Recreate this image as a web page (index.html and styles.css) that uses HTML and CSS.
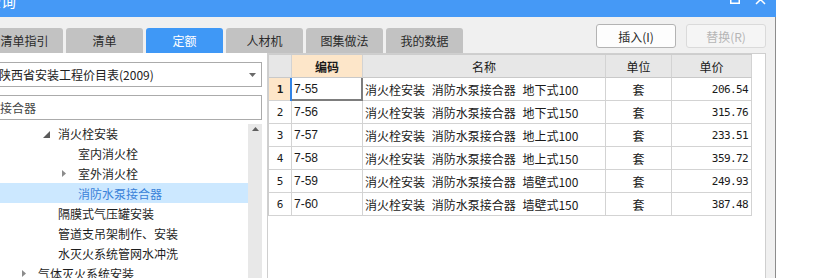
FILE: index.html
```html
<!DOCTYPE html>
<html lang="zh-CN">
  <head>
    <meta charset="UTF-8" />
    <meta name="viewport" content="width=device-width, initial-scale=1.0" />
    <title>查询</title>
    <link rel="stylesheet" href="styles.css">
  </head>
  <body>
    <div class="window">
      <div class="titlebar">
        <span class="title">查询</span>
        <div class="win-btns">
          <svg width="10" height="10" viewBox="0 0 10 10"><rect x="0.75" y="0.75" width="8.5" height="8.5" fill="none" stroke="#fff" stroke-width="1.5"/></svg>
          <svg width="11" height="11" viewBox="0 0 11 11"><path d="M1 1 L10 10 M10 1 L1 10" stroke="#fff" stroke-width="1.5"/></svg>
        </div>
      </div>

      <div class="win-body">
        <div class="toolbar">
          <div class="tabs">
            <div class="tab">清单指引</div>
            <div class="tab">清单</div>
            <div class="tab active">定额</div>
            <div class="tab">人材机</div>
            <div class="tab">图集做法</div>
            <div class="tab">我的数据</div>
          </div>
          <div class="actions">
            <button class="btn">插入(I)</button>
            <button class="btn" disabled>替换(R)</button>
          </div>
        </div>

        <div class="main">
          <!-- left: library + tree -->
          <div class="side">
            <div class="combo">
              <span>陕西省安装工程价目表(2009)</span>
              <svg width="7" height="4" viewBox="0 0 7 4"><path d="M0 0 H7 L3.5 4 Z" fill="#6a6a6a"/></svg>
            </div>
            <div class="search">接合器</div>
            <div class="tree">
              <ul class="tree-list">
                <li class="node lv2"><span class="caret"><svg width="7" height="7" viewBox="0 0 7 7"><path d="M7 0 V7 H0 Z" fill="#5a5a5a"/></svg></span>消火栓安装</li>
                <li class="node lv3"><span class="caret"></span>室内消火栓</li>
                <li class="node lv3"><span class="caret"><svg width="4" height="7" viewBox="0 0 4 7"><path d="M0 0 L4 3.5 L0 7 Z" fill="#8c8c8c"/></svg></span>室外消火栓</li>
                <li class="node lv3 selected"><span class="caret"></span>消防水泵接合器</li>
                <li class="node lv2"><span class="caret"></span>隔膜式气压罐安装</li>
                <li class="node lv2"><span class="caret"></span>管道支吊架制作、安装</li>
                <li class="node lv2"><span class="caret"></span>水灭火系统管网水冲洗</li>
                <li class="node lv1"><span class="caret"><svg width="4" height="7" viewBox="0 0 4 7"><path d="M0 0 L4 3.5 L0 7 Z" fill="#8c8c8c"/></svg></span>气体灭火系统安装</li>
              </ul>
              <div class="vscroll">
                <svg width="7" height="4" viewBox="0 0 7 4"><path d="M3.5 0 L7 4 H0 Z" fill="#5e5e5e"/></svg>
              </div>
            </div>
          </div>

          <!-- right: quota grid -->
          <div class="grid">
            <div class="sheet">
              <div class="cell head"></div>
              <div class="cell head hot">编码</div>
              <div class="cell head">名称</div>
              <div class="cell head">单位</div>
              <div class="cell head">单价</div>

              <div class="cell num hot">1</div>
              <div class="cell code current">7-55</div>
              <div class="cell name">消火栓安装 消防水泵接合器 地下式100</div>
              <div class="cell unit">套</div>
              <div class="cell price">206.54</div>

              <div class="cell num">2</div>
              <div class="cell code">7-56</div>
              <div class="cell name">消火栓安装 消防水泵接合器 地下式150</div>
              <div class="cell unit">套</div>
              <div class="cell price">315.76</div>

              <div class="cell num">3</div>
              <div class="cell code">7-57</div>
              <div class="cell name">消火栓安装 消防水泵接合器 地上式100</div>
              <div class="cell unit">套</div>
              <div class="cell price">233.51</div>

              <div class="cell num">4</div>
              <div class="cell code">7-58</div>
              <div class="cell name">消火栓安装 消防水泵接合器 地上式150</div>
              <div class="cell unit">套</div>
              <div class="cell price">359.72</div>

              <div class="cell num">5</div>
              <div class="cell code">7-59</div>
              <div class="cell name">消火栓安装 消防水泵接合器 墙壁式100</div>
              <div class="cell unit">套</div>
              <div class="cell price">249.93</div>

              <div class="cell num">6</div>
              <div class="cell code">7-60</div>
              <div class="cell name">消火栓安装 消防水泵接合器 墙壁式150</div>
              <div class="cell unit">套</div>
              <div class="cell price">387.48</div>
            </div>
          </div>
        </div>
      </div>
    </div>
  </body>
</html>
```

FILE: styles.css
```css
body,
html {
  margin: 0;
  padding: 0;
}

body {
  height: 278px;
  overflow: hidden;
  background: #fff;
  font-family: "Noto Sans CJK SC", sans-serif;
  font-size: 12px;
  color: #222;
}

/* Window frame (left part is off screen) */
.window {
  width: 790px;
  height: 300px;
  margin-left: -14px;
  display: flex;
  flex-direction: column;
}

.titlebar {
  flex: none;
  height: 17px;
  background: #4599f6;
  color: #fff;
  display: flex;
  justify-content: space-between;
  align-items: flex-start;
  overflow: visible;
}

.title {
  font-size: 15px;
  line-height: 17px;
  margin-top: -8px;
}

.win-btns {
  display: flex;
  gap: 15px;
  margin-right: 10px;
}

.win-btns svg {
  margin-top: -6px;
}

.win-body {
  flex: 1;
  display: flex;
  flex-direction: column;
  background: #f0f0f0;
  border-right: 1px solid #8c8c8c;
  min-height: 0;
}

/* Tabs + buttons */
.toolbar {
  flex: none;
  height: 36px;
  display: flex;
  align-items: flex-end;
}

.tabs {
  display: flex;
  gap: 3px;
}

.tab {
  width: 77px;
  height: 25px;
  line-height: 25px;
  text-align: center;
  background: #c2c2c2;
  border-radius: 3px 3px 0 0;
  color: #2a2a2a;
}

.tab.active {
  background: #3f98f6;
  color: #fff;
}

.actions {
  margin-left: auto;
  align-self: flex-start;
  margin-top: 7px;
  margin-right: 9px;
  display: flex;
  gap: 10px;
}

.btn {
  width: 80px;
  height: 24px;
  padding: 0;
  font-family: inherit;
  font-size: 12px;
  color: #2b2b2b;
  background: #fdfdfd;
  border: 1px solid #b3b3b3;
  border-radius: 3px;
}

.btn:disabled {
  color: #b5b5b5;
  background: #f5f5f5;
  border-color: #dadada;
}

.main {
  flex: 1;
  display: flex;
  padding-right: 9px;
  min-height: 0;
}

/* Left side */
.side {
  width: 281px;
  box-sizing: border-box;
  padding: 9px 5px 0 6px;
  background: #fff;
  display: flex;
  flex-direction: column;
}

.combo {
  height: 25px;
  box-sizing: border-box;
  border: 1px solid #ababab;
  padding: 0 5px 0 6px;
  display: flex;
  align-items: center;
  justify-content: space-between;
  white-space: nowrap;
}

.search {
  height: 25px;
  box-sizing: border-box;
  margin-top: 8px;
  border: 1px solid #ababab;
  padding-left: 7px;
  line-height: 23px;
  color: #454545;
}

.tree {
  flex: 1;
  display: flex;
  margin: 3px 0 0 -6px;
}

.tree-list {
  flex: 1;
  list-style: none;
  margin: 0;
  padding: 0;
}

.node {
  height: 20px;
  display: flex;
  align-items: center;
  white-space: nowrap;
  color: #1e1e1e;
}

.node.lv1 { padding-left: 32px; }
.node.lv2 { padding-left: 52px; }
.node.lv3 { padding-left: 72px; }

.caret {
  flex: none;
  width: 20px;
  height: 20px;
  box-sizing: border-box;
  padding-left: 4px;
  display: flex;
  align-items: center;
}

.lv2 .caret {
  padding: 3px 0 0 5px;
}

.node.selected {
  background: #cce8ff;
  color: #3a82d9;
}

.vscroll {
  width: 14px;
  margin-top: 1px;
  padding-top: 3px;
  background: #e8e8e8;
  display: flex;
  justify-content: center;
  align-items: flex-start;
}

/* Right grid */
.grid {
  flex: 1;
  background: #fff;
  border: 1px solid #cfcfcf;
  border-bottom: 0;
}

.sheet {
  display: grid;
  grid-template-columns: 23px 71px 243px 66px 80px;
  grid-auto-rows: 23px;
  width: max-content;
  border-left: 1px solid #cdcdcd;
  border-top: 1px solid #cdcdcd;
}

.cell {
  box-sizing: border-box;
  border-right: 1px solid #d3d3d3;
  border-bottom: 1px solid #d3d3d3;
  display: flex;
  align-items: center;
  white-space: nowrap;
  overflow: hidden;
  color: #1a1a1a;
}

.cell.head {
  justify-content: center;
  background: #e7e7e7;
  border-bottom-color: #c9c9c9;
}

.cell.hot {
  background: #fde6c9;
  font-weight: 700;
}

.cell.num {
  justify-content: center;
  font-family: "DejaVu Sans Mono", monospace;
  font-size: 11px;
}

.cell.code {
  padding-left: 2px;
  font-family: "Liberation Sans", sans-serif;
}

.cell.current {
  border-right: 2px solid #7d7d7d;
  border-bottom: 2px solid #7d7d7d;
  box-shadow: -2px 0 0 #3183e6;
}

.cell.name {
  padding-left: 2px;
  word-spacing: 4px;
}

.cell.unit {
  justify-content: center;
}

.cell.price {
  justify-content: flex-end;
  padding-right: 3px;
  font-family: "DejaVu Sans Mono", monospace;
  font-size: 11px;
  letter-spacing: -0.6px;
}
```
